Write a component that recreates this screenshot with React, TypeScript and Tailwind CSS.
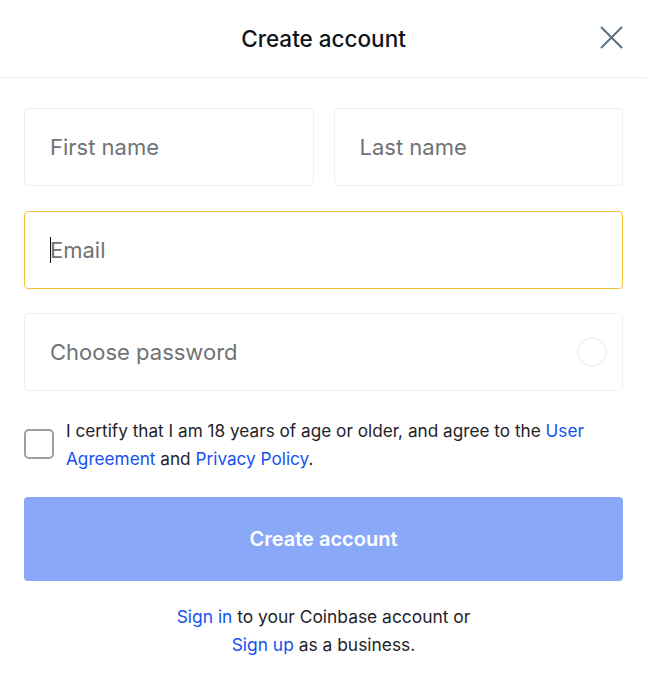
import { useState } from "react";

const font = { fontFamily: "Inter, 'Noto Sans', sans-serif" };

const Field = ({ placeholder, focused, right }: { placeholder: string; focused?: boolean; right?: React.ReactNode }) => (
  <div
    className={`flex h-[78px] items-center rounded-[4px] border bg-white pl-[25px] pr-[15px] ${
      focused ? "border-[#f2c33a]" : "border-[#eceef0]"
    }`}
  >
    {focused && <span className="mr-[-1px] h-[26px] w-px bg-[#111]" />}
    <input
      placeholder={placeholder}
      className="w-full bg-transparent text-[22px] text-[#1f2329] outline-none placeholder:text-[#707375]"
    />
    {right}
  </div>
);

export default function App() {
  const [checked, setChecked] = useState(false);

  return (
    <div className="min-h-[679px] w-[647px] bg-white" style={font}>
      <header className="relative flex h-[78px] items-center justify-center border-b border-[#eceef0]">
        <h1 className="text-[22.5px] font-medium text-[#0f1419]">Create account</h1>
        <button className="absolute right-[24px] top-[26px] text-[#5b7083]" aria-label="Close">
          <svg width="23" height="23" viewBox="0 0 23 23" fill="none" stroke="currentColor" strokeWidth="2">
            <path d="M1 1L22 22M22 1L1 22" />
          </svg>
        </button>
      </header>

      <div className="flex flex-col px-[24px] pt-[30px]">
        <div className="grid grid-cols-2 gap-[20px]">
          <Field placeholder="First name" />
          <Field placeholder="Last name" />
        </div>
        <div className="mt-[25px]">
          <Field placeholder="Email" focused />
        </div>
        <div className="mt-[24px]">
          <Field
            placeholder="Choose password"
            right={<span className="h-[30px] w-[30px] shrink-0 rounded-full border-2 border-[#f2f3f4]" />}
          />
        </div>

        <label className="mt-[26px] flex items-start gap-[12px] text-[17.2px] leading-[28px] text-[#1f2329]">
          <input
            type="checkbox"
            checked={checked}
            onChange={(e) => setChecked(e.target.checked)}
            className="mt-[12px] h-[30px] w-[30px] shrink-0 appearance-none rounded-[5px] border-2 border-[#9aa0a6]"
          />
          <span>
            I certify that I am 18 years of age or older, and agree to the{" "}
            <a className="text-[#1652f0]">User Agreement</a> and{" "}
            <a className="text-[#1652f0]">Privacy Policy</a>.
          </span>
        </label>

        <button className="mt-[24px] h-[84px] w-full rounded-[4px] bg-[#8aa8f8] text-[20px] font-semibold text-white">
          Create account
        </button>

        <p className="mt-[22px] text-center text-[17.4px] leading-[28px] text-[#1f2329]">
          <a className="text-[#1652f0]">Sign in</a> to your Coinbase account or
          <br />
          <a className="text-[#1652f0]">Sign up</a> as a business.
        </p>
      </div>
    </div>
  );
}
